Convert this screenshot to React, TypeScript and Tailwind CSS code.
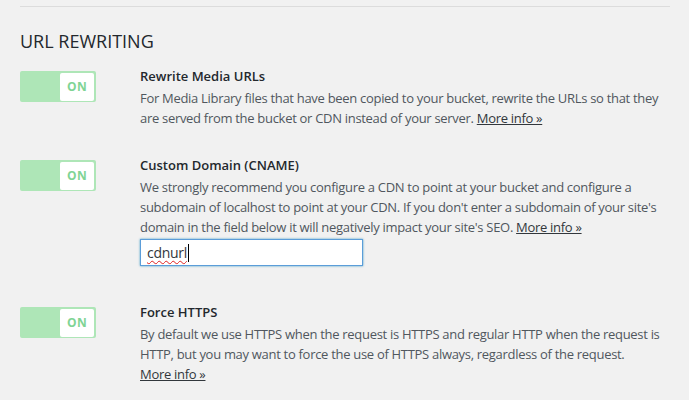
import React from 'react';

function Toggle() {
  return (
    <div className="w-[76px] h-[31px] bg-[#aee6b7] rounded-[2px] flex justify-end items-center pr-[2px] shrink-0">
      <div className="w-[34px] h-[28px] bg-white rounded-[2px] flex items-center justify-center">
        <span className="text-[12px] font-bold text-[#80d494] tracking-wide">ON</span>
      </div>
    </div>
  );
}

function MoreInfo() {
  return <a className="underline text-[#32373c] cursor-pointer whitespace-nowrap">More info »</a>;
}

function Row({ title, children, className = '' }: { title: string; children: React.ReactNode; className?: string }) {
  return (
    <div className={`flex ${className}`}>
      <div className="w-[120px] shrink-0 pt-[5px]">
        <Toggle />
      </div>
      <div className="flex-1">
        <h4 className="text-[13px] leading-[20px] font-semibold text-[#23282d]">{title}</h4>
        <div className="mt-[2px] text-[13px] tracking-[-0.3px] leading-[20px] text-[#50575e]">{children}</div>
      </div>
    </div>
  );
}

export default function App() {
  return (
    <div className="min-h-[400px] bg-[#f1f1f1] pl-[20px] pt-[6px]" style={{ fontFamily: '"Open Sans", "Noto Sans", sans-serif' }}>
      <div className="w-[650px]">
        <div className="h-px bg-[#dcdcdc]" />
        <h3 className="mt-[22px] text-[18px] leading-[24px] text-[#23282d]">URL REWRITING</h3>

        <Row title="Rewrite Media URLs" className="mt-[13px]">
          For Media Library files that have been copied to your bucket, rewrite the URLs so that they are served
          from the bucket or CDN instead of your server. <MoreInfo />
        </Row>

        <Row title="Custom Domain (CNAME)" className="mt-[27px]">
          <p>
            We strongly recommend you configure a CDN to point at your bucket and configure a subdomain of localhost
            to point at your CDN. If you don't enter a subdomain of your site's domain in the field below it will
            negatively impact your site's SEO. <MoreInfo />
          </p>
          <div className="mt-[2px] w-[223px] h-[27px] bg-white border border-[#5b9dd9] shadow-[0_0_2px_rgba(30,140,190,0.8)] flex items-center px-[6px]">
            <span className="text-[14px] text-[#32373c] underline decoration-wavy decoration-[#e02020] decoration-1 underline-offset-2">
              cdnurl
            </span>
            <span className="w-px h-[18px] bg-black ml-[1px]" />
          </div>
        </Row>

        <Row title="Force HTTPS" className="mt-[36px]">
          By default we use HTTPS when the request is HTTPS and regular HTTP when the request is HTTP, but you may
          want to force the use of HTTPS always, regardless of the request. <br />
          <MoreInfo />
        </Row>
      </div>
    </div>
  );
}
